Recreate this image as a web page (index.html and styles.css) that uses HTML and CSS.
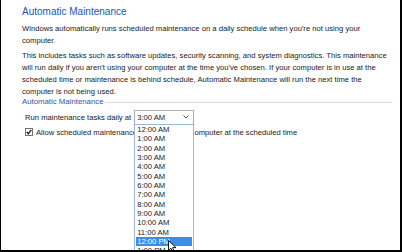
FILE: index.html
```html
<!DOCTYPE html>
<html>
<head>
<meta charset="utf-8">
<link rel="stylesheet" href="styles.css">
</head>
<body>
<div class="frame">
  <h1 class="title">Automatic Maintenance</h1>
  <p class="para first">Windows automatically runs scheduled maintenance on a daily schedule when you're not using your computer.</p>
  <p class="para second">This includes tasks such as software updates, security scanning, and system diagnostics. This maintenance will run daily if you aren't using your computer at the time you've chosen. If your computer is in use at the scheduled time or maintenance is behind schedule, Automatic Maintenance will run the next time the computer is not being used.</p>
  <div class="group-head"><span class="group-label">Automatic Maintenance</span><span class="group-rule"></span></div>
  <div class="run-row">
    <span>Run maintenance tasks daily at</span>
    <div class="select">
      <span class="select-value">3:00 AM</span>
      <svg class="chev" width="6" height="4" viewBox="0 0 6 4"><path d="M0.5 0.5 L3 3 L5.5 0.5" fill="none" stroke="#555" stroke-width="1"/></svg>
      <ul class="list">
        <li>12:00 AM</li>
        <li>1:00 AM</li>
        <li>2:00 AM</li>
        <li>3:00 AM</li>
        <li>4:00 AM</li>
        <li>5:00 AM</li>
        <li>6:00 AM</li>
        <li>7:00 AM</li>
        <li>8:00 AM</li>
        <li>9:00 AM</li>
        <li>10:00 AM</li>
        <li>11:00 AM</li>
        <li class="sel">12:00 PM</li>
        <li>1:00 PM</li>
      </ul>
    </div>
  </div>
  <div class="check-row">
    <svg class="cb" width="8" height="8" viewBox="0 0 8 8"><rect x="0.5" y="0.5" width="7" height="7" fill="#fff" stroke="#707070"/><path d="M1.8 4 L3.3 5.8 L6.3 1.8" fill="none" stroke="#111" stroke-width="1.3"/></svg>
    <span>Allow scheduled maintenance to wake up my computer at the scheduled time</span>
  </div>
  <svg class="cursor" width="9" height="13" viewBox="0 0 9 13"><path d="M0.5 0.5 L0.5 10.5 L3 8.2 L4.8 12.3 L6.3 11.6 L4.6 7.6 L8 7.6 Z" fill="#fff" stroke="#000" stroke-width="0.9" stroke-linejoin="round"/></svg>
</div>
</body>
</html>
```
FILE: styles.css
```css
html, body {
  margin: 0;
  padding: 0;
  background: #fff;
}
.frame {
  position: relative;
  width: 402px;
  height: 252px;
  box-sizing: border-box;
  border-left: 1px solid #000;
  border-right: 2px solid #000;
  border-bottom: 2px solid #000;
  padding: 5px 6px 0 21px;
  overflow: hidden;
  font-family: "Liberation Sans", Arial, sans-serif;
  font-size: 7.65px;
  color: #222;
}
.title {
  margin: 0;
  font-size: 10px;
  line-height: 14px;
  font-weight: normal;
  color: #2456a4;
}
.para {
  margin: 0;
  line-height: 12px;
}
.para.first {
  margin-top: 4px;
  max-width: 350px;
}
.para.second {
  margin-top: 3px;
}
.group-head {
  display: flex;
  align-items: center;
  height: 8px;
  gap: 2px;
}
.group-label {
  color: #2a5aa8;
  font-size: 7.8px;
  line-height: 8px;
}
.group-rule {
  flex: 1;
  border-top: 1px solid #d6dde5;
  margin-right: 2px;
}
.run-row {
  display: flex;
  align-items: center;
  margin-top: 3.5px;
  padding-left: 3px;
  height: 15px;
}
.select {
  position: relative;
  box-sizing: border-box;
  width: 60px;
  height: 15px;
  margin-left: 3px;
  border: 1px solid #acacac;
  display: flex;
  align-items: center;
  justify-content: space-between;
  padding: 0 4px 0 2px;
  background: #fff;
}
.chev {
  display: block;
}
.list {
  position: absolute;
  top: 13.5px;
  left: -1px;
  width: 60px;
  box-sizing: border-box;
  margin: 0;
  padding: 0 1px;
  list-style: none;
  background: #fff;
  border: 1px solid #9db7d6;
  border-right-color: #b4b4b4;
  z-index: 2;
}
.list li {
  height: 9.33px;
  line-height: 9.33px;
  padding-left: 1px;
  color: #222;
}
.list li.sel {
  background: #3a8ee6;
  color: #fff;
}
.check-row {
  display: flex;
  align-items: center;
  gap: 3px;
  margin-top: 2px;
  padding-left: 3px;
  line-height: 11px;
}
.cb {
  display: block;
}
.cursor {
  position: absolute;
  left: 167px;
  top: 240px;
  z-index: 3;
}
```
